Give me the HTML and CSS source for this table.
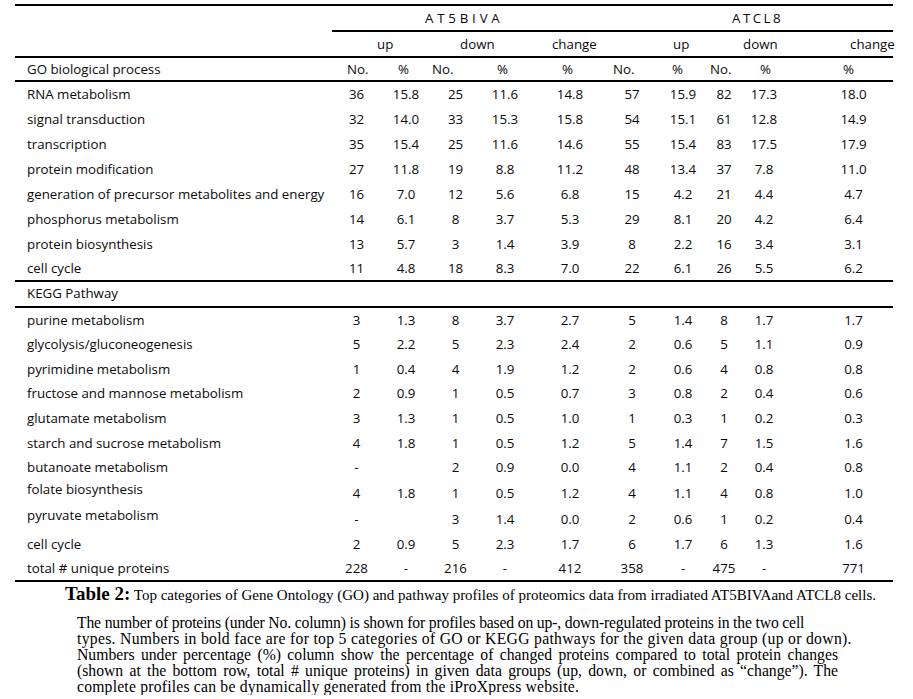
FILE: index.html
```html
<!DOCTYPE html>
<html>
<head>
<meta charset="utf-8">
<link rel="stylesheet" href="styles.css">
</head>
<body>
<div class="page">
<table class="tbl">
<colgroup>
<col class="w-label"><col class="w-c1"><col class="w-c2"><col class="w-c3"><col class="w-c4"><col class="w-c5"><col class="w-c6"><col class="w-c7"><col class="w-c8"><col class="w-c9"><col class="w-c10">
</colgroup>
<thead>
<tr class="r-a">
<th class="blank"></th>
<th colspan="5" class="grp g-at5">AT5BIVA</th>
<th colspan="5" class="grp g-atcl">ATCL8</th>
</tr>
<tr class="r-b">
<th class="blank"></th>
<th colspan="2" class="sub s-up1">up</th>
<th colspan="2" class="sub s-dn1">down</th>
<th class="sub s-ch1">change</th>
<th colspan="2" class="sub s-up2">up</th>
<th colspan="2" class="sub s-dn2">down</th>
<th class="sub s-ch2">change</th>
</tr>
<tr class="r-c">
<th class="lab">GO biological process</th>
<th class="h h1">No.</th><th class="h h2">%</th><th class="h h3">No.</th><th class="h h4">%</th><th class="h h5">%</th>
<th class="h h6">No.</th><th class="h h7">%</th><th class="h h8">No.</th><th class="h h9">%</th><th class="h h10">%</th>
</tr>
</thead>
<tbody class="go">
<tr><td class="lab">RNA metabolism</td><td>36</td><td>15.8</td><td>25</td><td>11.6</td><td>14.8</td><td>57</td><td>15.9</td><td>82</td><td>17.3</td><td class="last">18.0</td></tr>
<tr><td class="lab">signal transduction</td><td>32</td><td>14.0</td><td>33</td><td>15.3</td><td>15.8</td><td>54</td><td>15.1</td><td>61</td><td>12.8</td><td class="last">14.9</td></tr>
<tr><td class="lab">transcription</td><td>35</td><td>15.4</td><td>25</td><td>11.6</td><td>14.6</td><td>55</td><td>15.4</td><td>83</td><td>17.5</td><td class="last">17.9</td></tr>
<tr><td class="lab">protein modification</td><td>27</td><td>11.8</td><td>19</td><td>8.8</td><td>11.2</td><td>48</td><td>13.4</td><td>37</td><td>7.8</td><td class="last">11.0</td></tr>
<tr><td class="lab">generation of precursor metabolites and energy</td><td>16</td><td>7.0</td><td>12</td><td>5.6</td><td>6.8</td><td>15</td><td>4.2</td><td>21</td><td>4.4</td><td class="last">4.7</td></tr>
<tr><td class="lab">phosphorus metabolism</td><td>14</td><td>6.1</td><td>8</td><td>3.7</td><td>5.3</td><td>29</td><td>8.1</td><td>20</td><td>4.2</td><td class="last">6.4</td></tr>
<tr><td class="lab">protein biosynthesis</td><td>13</td><td>5.7</td><td>3</td><td>1.4</td><td>3.9</td><td>8</td><td>2.2</td><td>16</td><td>3.4</td><td class="last">3.1</td></tr>
<tr><td class="lab">cell cycle</td><td>11</td><td>4.8</td><td>18</td><td>8.3</td><td>7.0</td><td>22</td><td>6.1</td><td>26</td><td>5.5</td><td class="last">6.2</td></tr>
</tbody>
<tbody class="kegg-head">
<tr><td class="lab" colspan="11">KEGG Pathway</td></tr>
</tbody>
<tbody class="kegg">
<tr><td class="lab">purine metabolism</td><td>3</td><td>1.3</td><td>8</td><td>3.7</td><td>2.7</td><td>5</td><td>1.4</td><td>8</td><td>1.7</td><td class="last">1.7</td></tr>
<tr><td class="lab">glycolysis/gluconeogenesis</td><td>5</td><td>2.2</td><td>5</td><td>2.3</td><td>2.4</td><td>2</td><td>0.6</td><td>5</td><td>1.1</td><td class="last">0.9</td></tr>
<tr><td class="lab">pyrimidine metabolism</td><td>1</td><td>0.4</td><td>4</td><td>1.9</td><td>1.2</td><td>2</td><td>0.6</td><td>4</td><td>0.8</td><td class="last">0.8</td></tr>
<tr><td class="lab">fructose and mannose metabolism</td><td>2</td><td>0.9</td><td>1</td><td>0.5</td><td>0.7</td><td>3</td><td>0.8</td><td>2</td><td>0.4</td><td class="last">0.6</td></tr>
<tr><td class="lab">glutamate metabolism</td><td>3</td><td>1.3</td><td>1</td><td>0.5</td><td>1.0</td><td>1</td><td>0.3</td><td>1</td><td>0.2</td><td class="last">0.3</td></tr>
<tr><td class="lab">starch and sucrose metabolism</td><td>4</td><td>1.8</td><td>1</td><td>0.5</td><td>1.2</td><td>5</td><td>1.4</td><td>7</td><td>1.5</td><td class="last">1.6</td></tr>
<tr><td class="lab">butanoate metabolism</td><td>-</td><td></td><td>2</td><td>0.9</td><td>0.0</td><td>4</td><td>1.1</td><td>2</td><td>0.4</td><td class="last">0.8</td></tr>
<tr><td class="lab raised">folate biosynthesis</td><td>4</td><td>1.8</td><td>1</td><td>0.5</td><td>1.2</td><td>4</td><td>1.1</td><td>4</td><td>0.8</td><td class="last">1.0</td></tr>
<tr><td class="lab raised">pyruvate metabolism</td><td>-</td><td></td><td>3</td><td>1.4</td><td>0.0</td><td>2</td><td>0.6</td><td>1</td><td>0.2</td><td class="last">0.4</td></tr>
<tr><td class="lab">cell cycle</td><td>2</td><td>0.9</td><td>5</td><td>2.3</td><td>1.7</td><td>6</td><td>1.7</td><td>6</td><td>1.3</td><td class="last">1.6</td></tr>
<tr><td class="lab">total # unique proteins</td><td>228</td><td>-</td><td>216</td><td>-</td><td>412</td><td>358</td><td>-</td><td>475</td><td>-</td><td class="last">771</td></tr>
</tbody>
</table>
<p class="caption"><b class="cap-title">Table 2:</b> Top categories of Gene Ontology (GO) and pathway profiles of proteomics data from irradiated AT5BIVAand ATCL8 cells.</p>
<div class="note">
<div class="ln l1">The number of proteins (under No. column) is shown for profiles based on up-, down-regulated proteins in the two cell</div>
<div class="ln l2">types. Numbers in bold face are for top 5 categories of GO or KEGG pathways for the given data group (up or down).</div>
<div class="ln just">Numbers under percentage (%) column show the percentage of changed proteins compared to total protein changes</div>
<div class="ln just">(shown at the bottom row, total # unique proteins) in given data groups (up, down, or combined as “change”). The</div>
<div class="ln l5">complete profiles can be dynamically generated from the iProXpress website.</div>
</div>
</div>
</body>
</html>
```
FILE: styles.css
```css
html, body {
  margin: 0;
  padding: 0;
  background: #fff;
  color: #000;
}
.page {
  padding: 4px 0 0 15px;
  width: 878px;
}
.tbl {
  width: 878px;
  table-layout: fixed;
  border-collapse: collapse;
  border-top: 2px solid #000;
  border-bottom: 2px solid #000;
  font-family: "Open Sans", "Noto Sans", sans-serif;
  font-size: 13.3px;
  color: #0a0a0a;
}
.w-label { width: 317px; }
.w-c1 { width: 49px; }
.w-c2 { width: 50px; }
.w-c3 { width: 49px; }
.w-c4 { width: 50px; }
.w-c5 { width: 80px; }
.w-c6 { width: 44px; }
.w-c7 { width: 54px; }
.w-c8 { width: 32px; }
.w-c9 { width: 48px; }
.w-c10 { width: 105px; }

.tbl th, .tbl td {
  padding: 0;
  white-space: nowrap;
  font-weight: normal;
  vertical-align: middle;
}
.tbl td { text-align: center; }
.tbl td.lab, .tbl th.lab { text-align: left; padding-left: 12px; }

.r-a th { height: 24px; }
.r-a th.grp { border-bottom: 2px solid #000; text-align: left; }
.g-at5 { padding-left: 93px !important; letter-spacing: 3.8px; }
.g-atcl { padding-left: 122px !important; letter-spacing: 2.5px; }

.r-b th { height: 24px; border-bottom: 2px solid #000; text-align: left; }
.s-up1 { padding-left: 45px !important; }
.s-dn1 { padding-left: 29px !important; }
.s-ch1 { padding-left: 22px !important; }
.s-up2 { padding-left: 63px !important; }
.s-dn2 { padding-left: 35px !important; }
.s-ch2 { padding-left: 62px !important; }

.r-c th { height: 22px; border-bottom: 2px solid #000; text-align: left; }
.h1 { padding-left: 15px !important; }
.h2 { padding-left: 17px !important; }
.h3 { padding-left: 1px !important; }
.h4 { padding-left: 17px !important; }
.h5 { padding-left: 32px !important; }
.h6 { padding-left: 3px !important; }
.h7 { padding-left: 18px !important; }
.h8 { padding-left: 2px !important; }
.h9 { padding-left: 20px !important; }
.h10 { padding-left: 55px !important; }

.tbl td:nth-child(8) { padding-left: 4px; }
.tbl td.last { padding-left: 26px; }

.go tr { height: 25px; }
.go tr:last-child td { border-bottom: 2px solid #000; }
.kegg-head tr { height: 26px; }
.kegg-head td { border-bottom: 2px solid #000; padding-bottom: 3px; }
.kegg tr { height: 24.7px; }
.tbl td.raised { padding-bottom: 8px; }

.caption {
  margin: 2px 0 0 0;
  padding-left: 50px;
  font-family: "Liberation Serif", serif;
  font-size: 15px;
  line-height: 20px;
  white-space: nowrap;
}
.cap-title {
  font-weight: bold;
  font-size: 19px;
}
.note {
  margin-top: 10px;
  padding-left: 62px;
  width: 761px;
  font-family: "Liberation Serif", serif;
  font-size: 15.7px;
  line-height: 16px;
}
.ln { white-space: nowrap; }
.ln.l1 { letter-spacing: -0.17px; }
.ln.l2 { letter-spacing: 0.3px; }
.ln.l5 { letter-spacing: 0.2px; }
.ln.just {
  white-space: normal;
  text-align: justify;
  text-align-last: justify;
}
```
